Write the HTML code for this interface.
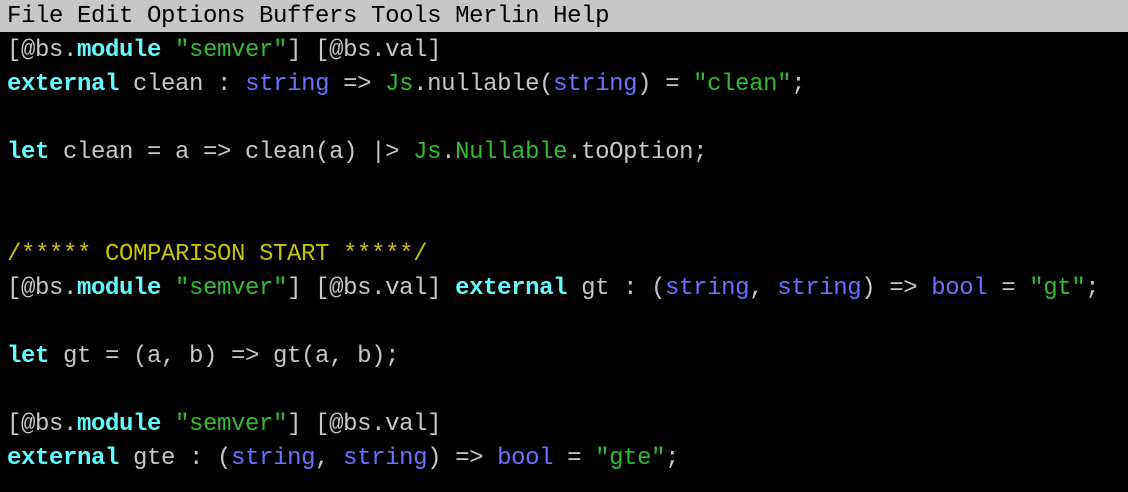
<!DOCTYPE html>
<html><head><style>
html,body{margin:0;padding:0;background:#000;width:1128px;height:492px;overflow:hidden}
pre{margin:0;font-family:"Liberation Mono",monospace;font-size:24px;letter-spacing:-0.4px;line-height:34px;color:#c7c7c7;white-space:pre}
.menu{background:#c7c7c7;color:#000;height:32px;line-height:34px;padding-left:7px;font-family:"Liberation Mono",monospace;font-size:24px;letter-spacing:-0.4px;white-space:pre;overflow:hidden}
.code{padding-left:7px;margin-top:2px}
.k{color:#5ffdff;font-weight:bold}
.s{color:#2fbc2f}
.t{color:#6a71ff}
.c{color:#c7c400}
</style></head><body>
<div class="menu">File Edit Options Buffers Tools Merlin Help</div>
<pre class="code">[@bs.<span class="k">module</span> <span class="s">"semver"</span>] [@bs.val]
<span class="k">external</span> clean : <span class="t">string</span> =&gt; <span class="s">Js</span>.nullable(<span class="t">string</span>) = <span class="s">"clean"</span>;

<span class="k">let</span> clean = a =&gt; clean(a) |&gt; <span class="s">Js</span>.<span class="s">Nullable</span>.toOption;


<span class="c">/***** COMPARISON START *****/</span>
[@bs.<span class="k">module</span> <span class="s">"semver"</span>] [@bs.val] <span class="k">external</span> gt : (<span class="t">string</span>, <span class="t">string</span>) =&gt; <span class="t">bool</span> = <span class="s">"gt"</span>;

<span class="k">let</span> gt = (a, b) =&gt; gt(a, b);

[@bs.<span class="k">module</span> <span class="s">"semver"</span>] [@bs.val]
<span class="k">external</span> gte : (<span class="t">string</span>, <span class="t">string</span>) =&gt; <span class="t">bool</span> = <span class="s">"gte"</span>;
</pre>
</body></html>
